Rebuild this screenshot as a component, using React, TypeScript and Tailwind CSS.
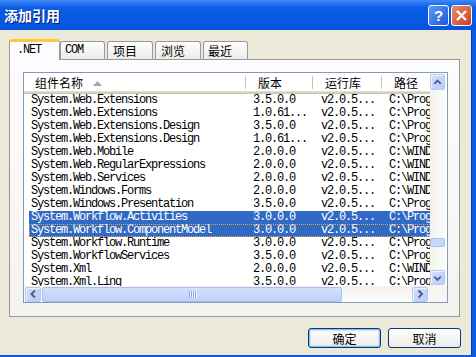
import clsx from "clsx";

const mono = "font-['Liberation_Mono',monospace] text-[12px] tracking-[-1.2px]";

const rows: string[][] = [
  ["System.Web.Extensions", "3.5.0.0", "v2.0.5...", "C:\\Program Files\\Reference Assemblies"],
  ["System.Web.Extensions", "1.0.61...", "v2.0.5...", "C:\\Program Files\\Microsoft ASP.NET"],
  ["System.Web.Extensions.Design", "3.5.0.0", "v2.0.5...", "C:\\Program Files\\Reference Assemblies"],
  ["System.Web.Extensions.Design", "1.0.61...", "v2.0.5...", "C:\\Program Files\\Microsoft ASP.NET"],
  ["System.Web.Mobile", "2.0.0.0", "v2.0.5...", "C:\\WINDOWS\\Microsoft.NET\\Framework"],
  ["System.Web.RegularExpressions", "2.0.0.0", "v2.0.5...", "C:\\WINDOWS\\Microsoft.NET\\Framework"],
  ["System.Web.Services", "2.0.0.0", "v2.0.5...", "C:\\WINDOWS\\Microsoft.NET\\Framework"],
  ["System.Windows.Forms", "2.0.0.0", "v2.0.5...", "C:\\WINDOWS\\Microsoft.NET\\Framework"],
  ["System.Windows.Presentation", "3.5.0.0", "v2.0.5...", "C:\\Program Files\\Reference Assemblies"],
  ["System.Workflow.Activities", "3.0.0.0", "v2.0.5...", "C:\\Program Files\\Reference Assemblies"],
  ["System.Workflow.ComponentModel", "3.0.0.0", "v2.0.5...", "C:\\Program Files\\Reference Assemblies"],
  ["System.Workflow.Runtime", "3.0.0.0", "v2.0.5...", "C:\\Program Files\\Reference Assemblies"],
  ["System.WorkflowServices", "3.5.0.0", "v2.0.5...", "C:\\Program Files\\Reference Assemblies"],
  ["System.Xml", "2.0.0.0", "v2.0.5...", "C:\\WINDOWS\\Microsoft.NET\\Framework"],
  ["System.Xml.Linq", "3.5.0.0", "v2.0.5...", "C:\\Program Files\\Reference Assemblies"],
];

function Chevron({ dir }: { dir: "up" | "down" | "left" | "right" }) {
  const d = {
    up: "M3.5 9 L7 5.5 L10.5 9",
    down: "M3.5 5.5 L7 9 L10.5 5.5",
    left: "M9 3.5 L5.5 7 L9 10.5",
    right: "M5.5 3.5 L9 7 L5.5 10.5",
  }[dir];
  return (
    <svg width="14" height="14" viewBox="0 0 14 14">
      <path d={d} fill="none" stroke="#4D6185" strokeWidth="2" />
    </svg>
  );
}

function ScrollBtn({ dir, className }: { dir: "up" | "down" | "left" | "right"; className?: string }) {
  return (
    <div
      className={clsx(
        "flex items-center justify-center rounded-[2px] border border-[#B4C8F6] bg-gradient-to-br from-[#D2DEFD] to-[#B9CCF9] shadow-[inset_1px_1px_0_#EEF3FF]",
        className
      )}
    >
      <Chevron dir={dir} />
    </div>
  );
}

function Row({ r, sel, focus }: { r: string[]; sel?: boolean; focus?: boolean }) {
  return (
    <div
      className={clsx(
        "flex h-[13px] w-[401px] ml-[5px] items-center whitespace-nowrap leading-[13px]",
        sel ? "bg-[#316AC5] text-white" : "text-black",
        focus && "outline-1 outline-dotted outline-[#E0A84C] -outline-offset-1"
      )}
    >
      <div className="w-[217px] pl-[2px] shrink-0">{r[0]}</div>
      <div className="w-[67px] pl-[7px] shrink-0">{r[1]}</div>
      <div className="w-[69px] pl-[8px] shrink-0">{r[2]}</div>
      <div className="pl-[7px] shrink-0">{r[3]}</div>
    </div>
  );
}

function HeaderCell({ label, w, arrow }: { label: string; w: string; arrow?: boolean }) {
  return (
    <div className={clsx("flex items-center shrink-0 h-full", w)}>
      <span className="pl-[11px] pt-[2px]">{label}</span>
      {arrow && (
        <svg width="9" height="5" viewBox="0 0 9 5" className="ml-[10px] mt-[2px]">
          <path d="M0 5 L4.5 0 L9 5 Z" fill="#ACA899" />
        </svg>
      )}
      <div className="ml-auto h-[13px] w-[2px] border-l border-[#C7C5B2] bg-white" />
    </div>
  );
}

function ListView() {
  return (
    <div className="w-[425px] h-[231px] border border-[#7F9DB9] bg-white flex flex-col">
      <div className="flex flex-1 min-h-0">
        <div className="w-[406px] flex flex-col overflow-hidden">
          <div className="h-[21px] shrink-0 flex flex-col">
            <div className="flex h-[18px] items-center bg-white font-['Noto_Sans_CJK_SC',sans-serif] text-[12px]">
              <HeaderCell label="组件名称" w="w-[223px]" arrow />
              <HeaderCell label="版本" w="w-[67px]" />
              <HeaderCell label="运行库" w="w-[69px]" />
              <HeaderCell label="路径" w="w-[60px]" />
            </div>
            <div className="h-px bg-[#E2DECD]" />
            <div className="h-px bg-[#D6D2C2]" />
            <div className="h-px bg-[#CBC7B8]" />
          </div>
          <div className={clsx("flex-1 overflow-hidden", mono)}>
            {rows.map((r, i) => (
              <Row key={i} r={r} sel={i === 9 || i === 10} focus={i === 10} />
            ))}
          </div>
        </div>
        <div className="w-[17px] flex flex-col bg-gradient-to-r from-[#F3F1EC] to-[#FEFEFB]">
          <ScrollBtn dir="up" className="mt-[1px] w-[15px] h-[16px]" />
          <div className="flex-1 flex flex-col">
            <div className="mt-[148px] w-[15px] h-[9px] rounded-[2px] border border-[#A9BEF2] bg-[#C8D7FC]" />
          </div>
          <ScrollBtn dir="down" className="mb-[1px] w-[15px] h-[15px]" />
        </div>
      </div>
      <div className="h-[16px] flex shrink-0">
        <div className="w-[406px] flex items-center bg-gradient-to-b from-[#F3F1EC] to-[#FEFEFB]">
          <ScrollBtn dir="left" className="ml-[1px] w-[16px] h-[15px]" />
          <div className="ml-[1px] w-[300px] h-[15px] rounded-[2px] border border-[#A9BEF2] bg-gradient-to-b from-[#D3E0FD] to-[#BED0FA] flex items-center justify-center gap-[1px]">
            {[0, 1, 2, 3].map((i) => (
              <div key={i} className="w-px h-[7px] bg-[#8EA6E8] shadow-[1px_0_0_#EEF3FF]" />
            ))}
          </div>
          <div className="flex-1" />
          <ScrollBtn dir="right" className="mr-[2px] w-[16px] h-[15px]" />
        </div>
        <div className="w-[17px] bg-[#F6F5F0]" />
      </div>
    </div>
  );
}

function Tab({ label, active, w, pl, isMono }: { label: string; active?: boolean; w: string; pl: string; isMono?: boolean }) {
  return (
    <div
      className={clsx(
        "shrink-0 rounded-t-[3px] border border-[#919B9C] flex items-start",
        w,
        pl,
        active
          ? "h-[21px] -mb-px border-b-0 relative z-10 bg-[#FCFCFE] border-t-[3px] border-t-[#FFC83C] pt-[2px]"
          : "h-[18px] border-b-0 bg-gradient-to-b from-white to-[#ECEBE6] pt-[2px]",
        isMono ? mono : "font-['Noto_Sans_CJK_SC',sans-serif] text-[12px]"
      )}
    >
      <span className="leading-[13px]">{label}</span>
    </div>
  );
}

function TitleBar() {
  return (
    <div className="h-[30px] shrink-0 flex items-center bg-gradient-to-b from-[#3E8AF6] via-[#0A5DE6] via-25% to-[#0653DC] pl-[4px] pr-[4px]">
      <span className="font-['Noto_Sans_CJK_SC',sans-serif] font-bold text-[14px] text-white [text-shadow:1px_1px_0_#0A1A7A] leading-[14px]">
        添加引用
      </span>
      <div className="ml-auto flex gap-[2px]">
        <div className="w-[21px] h-[21px] rounded-[3px] border border-white bg-gradient-to-br from-[#5C9BFB] to-[#1D55DA] flex items-center justify-center text-white font-bold text-[15px] leading-none font-['Liberation_Sans',sans-serif]">
          ?
        </div>
        <div className="w-[21px] h-[21px] rounded-[3px] border border-white bg-gradient-to-br from-[#EB8B6D] to-[#C63E1A] flex items-center justify-center">
          <svg width="13" height="13" viewBox="0 0 13 13">
            <path d="M2 2 L11 11 M11 2 L2 11" stroke="white" strokeWidth="2.4" />
          </svg>
        </div>
      </div>
    </div>
  );
}

function XpButton({ label, def }: { label: string; def?: boolean }) {
  return (
    <div
      className={clsx(
        "w-[73px] h-[20px] rounded-[3px] border border-[#003C74] bg-gradient-to-b from-white to-[#ECEBE6] flex items-center justify-center font-['Noto_Sans_CJK_SC',sans-serif] text-[12px] leading-[13px]",
        def && "shadow-[inset_0_0_0_1px_#97B9F0,inset_0_0_0_2px_#CEE7FF]"
      )}
    >
      {label}
    </div>
  );
}

export default function App() {
  return (
    <div className="w-[476px] h-[357px] flex flex-col overflow-hidden bg-[#0A5AE6] text-black">
      <TitleBar />
      <div className="flex flex-1 min-h-0">
        <div className="flex-1 bg-[#ECE9D8] flex flex-col pl-[9px] pt-[9px]">
          <div className="flex items-end h-[20px]">
            <Tab label=".NET" active w="w-[51px]" pl="pl-[7px]" isMono />
            <Tab label="COM" w="w-[45px]" pl="pl-[4px]" isMono />
            <div className="w-[2px]" />
            <Tab label="项目" w="w-[46px]" pl="pl-[5px]" />
            <div className="w-[2px]" />
            <Tab label="浏览" w="w-[46px]" pl="pl-[5px]" />
            <div className="w-[2px]" />
            <Tab label="最近" w="w-[45px]" pl="pl-[4px]" />
          </div>
          <div className="w-[451px] h-[258px] border border-[#919B9C] bg-gradient-to-b from-[#FCFCFE] to-[#F4F3EE] pl-[13px] pt-[12px]">
            <ListView />
          </div>
          <div className="mt-[11px] flex justify-end gap-[7px] pr-[10px]">
            <XpButton label="确定" def />
            <XpButton label="取消" />
          </div>
        </div>
        <div className="w-[5px] border-l border-[#0831D9] bg-[#0A5AE6]" />
      </div>
      <div className="h-[2px] shrink-0 bg-[#0A5AE6]" />
    </div>
  );
}
